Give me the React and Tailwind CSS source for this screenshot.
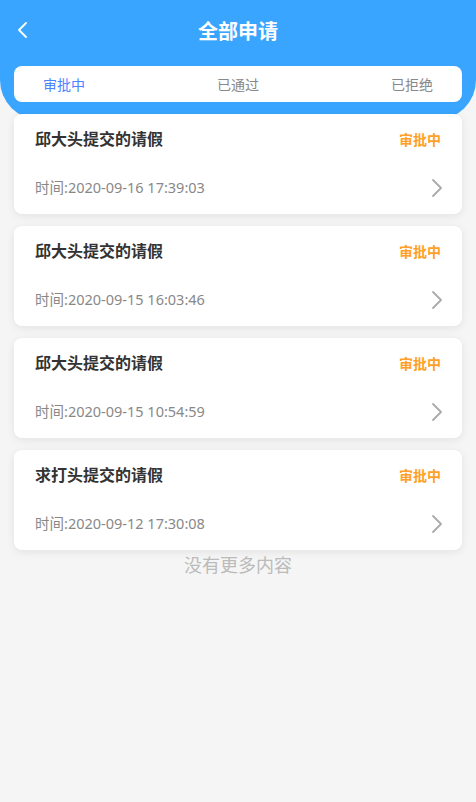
import React from "react";

const records = [
  { name: "邱大头提交的请假", time: "2020-09-16 17:39:03" },
  { name: "邱大头提交的请假", time: "2020-09-15 16:03:46" },
  { name: "邱大头提交的请假", time: "2020-09-15 10:54:59" },
  { name: "求打头提交的请假", time: "2020-09-12 17:30:08" },
];

const font = { fontFamily: '"Noto Sans", "Noto Sans CJK SC", sans-serif' };

export default function App() {
  return (
    <div className="min-h-[802px] w-full bg-[#f5f5f5]" style={font}>
      <div className="relative h-[120px] rounded-b-[40px] bg-[#3aa5ff] px-[14px]">
        <div className="relative flex h-[64px] items-center justify-center">
          <svg className="absolute left-[1px] top-[21px]" width="14" height="18" viewBox="0 0 14 18" fill="none">
            <path d="M11 2 L4 9 L11 16" stroke="#fff" strokeWidth="1.8" strokeLinecap="round" strokeLinejoin="round" />
          </svg>
          <h1 className="text-[20px] font-bold leading-none text-white">全部申请</h1>
        </div>
        <div className="mt-[2px] flex h-[36px] items-center justify-between rounded-lg bg-white px-[29px] text-[14px]">
          <span className="text-[#4a84ff]">审批中</span>
          <span className="text-[#888]">已通过</span>
          <span className="text-[#888]">已拒绝</span>
        </div>
      </div>

      <div className="relative -mt-[6px] flex flex-col gap-3 px-[14px]">
        {records.map((r, i) => (
          <div
            key={i}
            className="flex h-[100px] flex-col rounded-lg bg-white px-[21px] shadow-[0_2px_8px_rgba(0,0,0,0.08)]"
          >
            <div className="flex h-[50px] items-center justify-between">
              <span className="text-[16px] font-bold text-[#333]">{r.name}</span>
              <span className="text-[14px] font-bold text-[#ffa028]">审批中</span>
            </div>
            <div className="flex flex-1 items-center justify-between pb-[2px]">
              <span className="text-[14.5px] text-[#888]">时间:{r.time}</span>
              <svg width="12" height="20" viewBox="0 0 12 20" fill="none" className="-mr-[2px]">
                <path d="M2 2 L10 10 L2 18" stroke="#aaa" strokeWidth="1.8" strokeLinecap="round" strokeLinejoin="round" />
              </svg>
            </div>
          </div>
        ))}
        <p className="-mt-[10px] text-center text-[18px] text-[#bbb]">没有更多内容</p>
      </div>
    </div>
  );
}
